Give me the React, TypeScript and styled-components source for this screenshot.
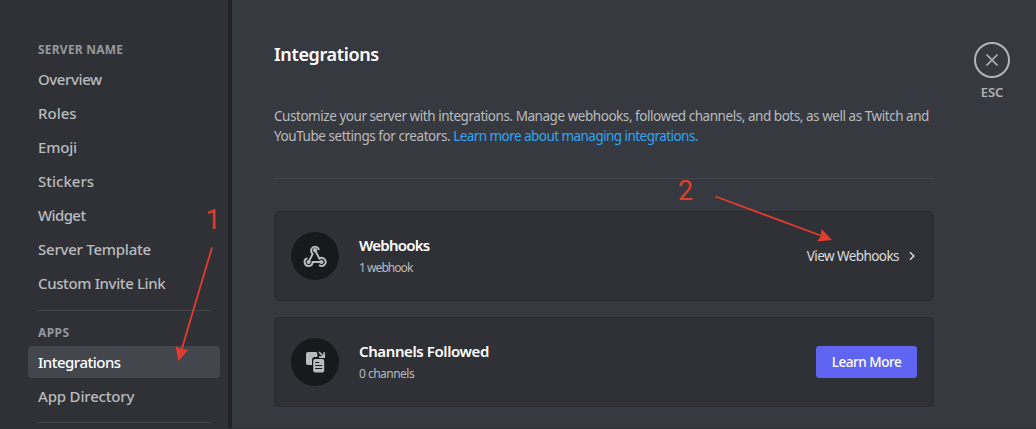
import React from "react";
import styled, { createGlobalStyle } from "styled-components";

const Global = createGlobalStyle`
  * { box-sizing: border-box; }
  body { margin: 0; background: #36393f; overflow: hidden; }
  button { font: inherit; }
`;

const Page = styled.div`
  position: relative;
  display: flex;
  width: 1036px;
  height: 429px;
  overflow: hidden;
  border-bottom: 1px solid #2f3136;
  background: #36393f;
  color: #b9bbbe;
  font-family: "Noto Sans", "Open Sans", sans-serif;
`;

const Sidebar = styled.nav`
  width: 232px;
  flex: none;
  padding: 40px 8px 0 28px;
  background: #2f3136;
  border-right: 4px solid #212226;
`;

const GroupTitle = styled.h2<{ $track?: number }>`
  margin: 0;
  padding-left: 10px;
  height: 23px;
  line-height: 20px;
  font-size: 12px;
  font-weight: 700;
  letter-spacing: ${(p) => p.$track ?? 0}px;
  color: #96989d;
`;

const NavItem = styled.a<{ $active?: boolean; $track?: number }>`
  display: block;
  height: 32px;
  margin-bottom: 2px;
  padding-left: 10px;
  border-radius: 4px;
  line-height: 32px;
  font-size: 15px;
  font-weight: 500;
  white-space: nowrap;
  letter-spacing: ${(p) => p.$track ?? 0}px;
  color: ${(p) => (p.$active ? "#fff" : "#b9bbbe")};
  background: ${(p) => (p.$active ? "#43464d" : "transparent")};
`;

const Separator = styled.div<{ $last?: boolean }>`
  height: 1px;
  margin: ${(p) => (p.$last ? "10px 10px 0" : "11px 10px 12px")};
  background: #42454a;
`;

const Main = styled.main`
  width: 660px;
  margin-left: 42px;
  padding-top: 42px;
  flex: none;
`;

const Title = styled.h1`
  margin: 0;
  height: 64px;
  line-height: 24px;
  font-size: 18px;
  font-weight: 600;
  letter-spacing: -0.35px;
  color: #fff;
`;

const Intro = styled.p`
  margin: 0 0 32px;
  height: 73px;
  border-bottom: 1px solid #42454b;
  line-height: 20px;
  font-size: 13.5px;
  white-space: nowrap;
`;

const Line = styled.span<{ $track: number }>`
  display: block;
  letter-spacing: ${(p) => p.$track}px;
`;

const Link = styled.a`
  letter-spacing: -0.55px;
  color: #34a3f0;
`;

const Card = styled.section`
  display: flex;
  align-items: center;
  height: 90px;
  margin-bottom: 16px;
  padding: 0 16px;
  border: 1px solid #292b2f;
  border-radius: 5px;
  background: #2f3136;
`;

const IconDisc = styled.div`
  display: flex;
  align-items: center;
  justify-content: center;
  width: 48px;
  height: 48px;
  margin-right: 20px;
  border-radius: 50%;
  background: #18191c;
  color: #b9bbbe;
`;

const CardText = styled.div`
  flex: 1;
  padding-bottom: 2px;
`;

const CardTitle = styled.h3<{ $track?: number }>`
  margin: 0;
  line-height: 22px;
  font-size: 15px;
  font-weight: 600;
  letter-spacing: ${(p) => p.$track ?? 0}px;
  color: #fff;
`;

const CardMeta = styled.div<{ $track?: number }>`
  margin-top: 3px;
  line-height: 18px;
  font-size: 12px;
  letter-spacing: ${(p) => p.$track ?? 0}px;
`;

const ViewLink = styled.a`
  display: flex;
  align-items: center;
  gap: 8px;
  font-size: 13.5px;
  letter-spacing: -0.56px;
  color: #dcddde;
`;

const LearnButton = styled.button`
  width: 101px;
  height: 32px;
  padding: 0;
  border: 0;
  border-radius: 3px;
  background: #5f65f0;
  color: #fff;
  font-size: 13.5px;
  font-weight: 500;
  letter-spacing: -0.45px;
`;

const CloseColumn = styled.div`
  display: flex;
  flex-direction: column;
  align-items: center;
  width: 36px;
  margin-left: 40px;
  padding-top: 42px;
`;

const CloseRing = styled.div`
  display: flex;
  align-items: center;
  justify-content: center;
  width: 36px;
  height: 36px;
  border: 2px solid #b2b4b8;
  border-radius: 50%;
`;

const CloseLabel = styled.div`
  margin-top: 5px;
  line-height: 18px;
  font-size: 13px;
  font-weight: 600;
  letter-spacing: -0.1px;
  color: #b0b2b6;
`;

const Annotations = styled.svg`
  position: absolute;
  inset: 0;
  pointer-events: none;
`;

const serverItems: [string, number][] = [
  ["Overview", -0.4],
  ["Roles", 0],
  ["Emoji", -0.2],
  ["Stickers", 0],
  ["Widget", -0.6],
  ["Server Template", -0.24],
  ["Custom Invite Link", -0.37],
];

const WebhookIcon = () => (
  <svg width="24" height="24" viewBox="0 0 24 24">
    <g fill="currentColor">
      <circle cx="12" cy="6.2" r="2.1" />
      <circle cx="5.6" cy="18" r="2.1" />
      <circle cx="18.4" cy="18" r="2.1" />
    </g>
    <g fill="none" stroke="currentColor" strokeWidth="1.9">
      <path d="M5.6 18 9.7 9.9A4 4 0 1 1 16 6" />
      <path d="M12 6.2 16.4 14.6A4 4 0 1 1 16.1 21.1" />
      <path d="M18.4 18H9.6A4 4 0 1 1 4.5 14.2" />
    </g>
  </svg>
);

const FollowedIcon = () => (
  <svg width="24" height="24" viewBox="0 0 24 24">
    <path
      fill="currentColor"
      d="M5 2h7.5a1.8 1.8 0 0 1 1.8 2v3H12a3 3 0 0 0-3 3v5H5a2 2 0 0 1-2-2V4a2 2 0 0 1 2-2Z"
    />
    <rect x="10.2" y="9" width="11" height="13.5" rx="2" fill="currentColor" />
    <path d="M12.2 12.5h4M12.2 15.5h7M12.2 18.5h7" stroke="#18191c" strokeWidth="1" />
    <path d="M16 2l5 5M21.2 2.2v5H16" fill="none" stroke="currentColor" strokeWidth="1.7" />
  </svg>
);

export default function App() {
  return (
    <Page>
      <Global />
      <Sidebar>
        <GroupTitle $track={0.22}>SERVER NAME</GroupTitle>
        {serverItems.map(([label, track]) => (
          <NavItem key={label} $track={track}>{label}</NavItem>
        ))}
        <Separator />
        <GroupTitle $track={0.4}>APPS</GroupTitle>
        <NavItem $active $track={-0.5}>Integrations</NavItem>
        <NavItem $track={-0.18}>App Directory</NavItem>
        <Separator $last />
      </Sidebar>
      <Main>
        <Title>Integrations</Title>
        <Intro>
          <Line $track={-0.457}>
            Customize your server with integrations. Manage webhooks, followed channels, and bots, as well as Twitch and
          </Line>
          <Line $track={-0.45}>
            YouTube settings for creators. <Link>Learn more about managing integrations.</Link>
          </Line>
        </Intro>
        <Card>
          <IconDisc><WebhookIcon /></IconDisc>
          <CardText>
            <CardTitle $track={-0.75}>Webhooks</CardTitle>
            <CardMeta $track={-0.95}>1 webhook</CardMeta>
          </CardText>
          <ViewLink>
            View Webhooks
            <svg width="10" height="10" viewBox="0 0 10 10">
              <path d="M3 1.2 6.8 5 3 8.8" fill="none" stroke="currentColor" strokeWidth="1.5" />
            </svg>
          </ViewLink>
        </Card>
        <Card>
          <IconDisc><FollowedIcon /></IconDisc>
          <CardText>
            <CardTitle $track={-0.4}>Channels Followed</CardTitle>
            <CardMeta $track={-0.52}>0 channels</CardMeta>
          </CardText>
          <LearnButton>Learn More</LearnButton>
        </Card>
      </Main>
      <CloseColumn>
        <CloseRing>
          <svg width="14" height="14" viewBox="0 0 14 14">
            <path d="M1.5 1.5l11 11M12.5 1.5l-11 11" stroke="#b2b4b8" strokeWidth="1.7" />
          </svg>
        </CloseRing>
        <CloseLabel>ESC</CloseLabel>
      </CloseColumn>
      <Annotations width="1036" height="429" fill="#e33b2e" fontFamily="Roboto, sans-serif" fontSize="27">
        <text x="205.5" y="229">1</text>
        <text x="678" y="200">2</text>
        <path d="M212 247.5 181.5 350M715.5 196.5 822 236" stroke="#e33b2e" strokeWidth="1.8" />
        <path d="M178.5 361 175.500 346 181.500 349.500 188.500 349.500ZM832 240 817 241.500 821 236 821.500 229Z" />
      </Annotations>
    </Page>
  );
}
